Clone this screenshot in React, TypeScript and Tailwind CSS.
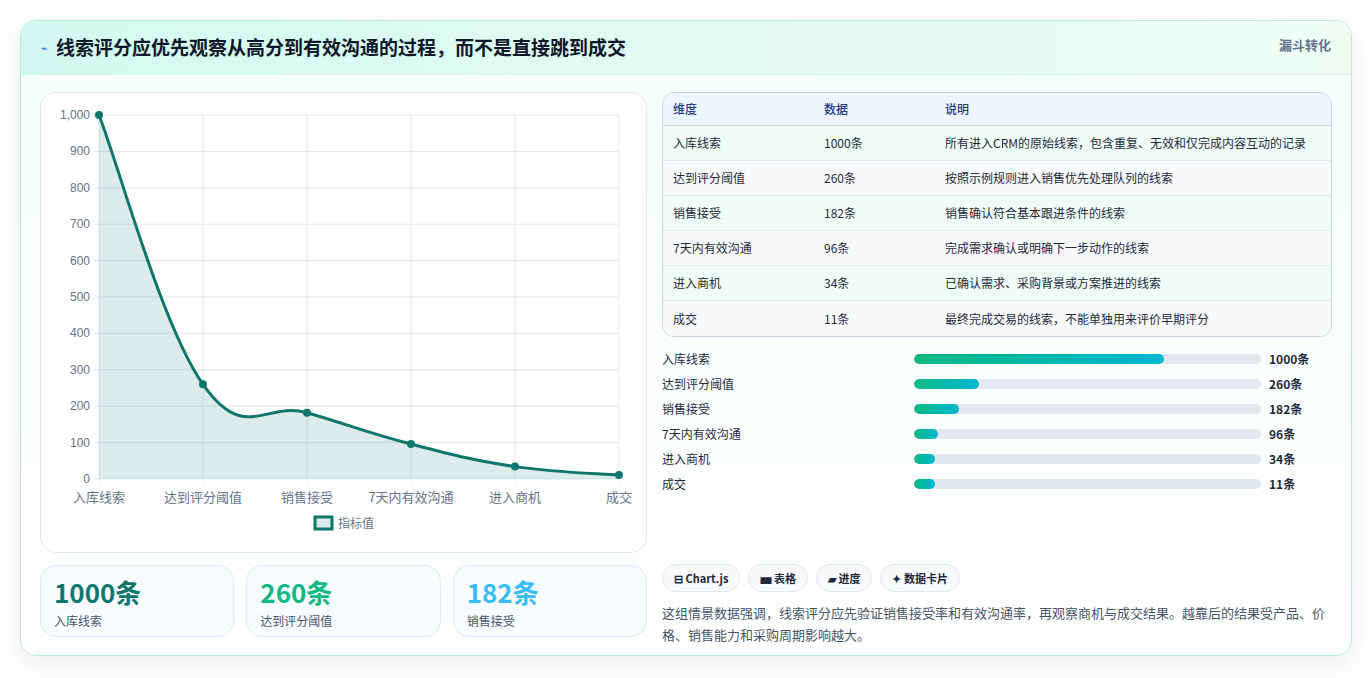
import React from 'react';

const rows = [
  { name: '入库线索', v: 1000, desc: '所有进入CRM的原始线索，包含重复、无效和仅完成内容互动的记录' },
  { name: '达到评分阈值', v: 260, desc: '按照示例规则进入销售优先处理队列的线索' },
  { name: '销售接受', v: 182, desc: '销售确认符合基本跟进条件的线索' },
  { name: '7天内有效沟通', v: 96, desc: '完成需求确认或明确下一步动作的线索' },
  { name: '进入商机', v: 34, desc: '已确认需求、采购背景或方案推进的线索' },
  { name: '成交', v: 11, desc: '最终完成交易的线索，不能单独用来评价早期评分' },
];

const X0 = 58, X1 = 578, Y0 = 22, Y1 = 386;
const pts = rows.map((r, i) => [X0 + (i * (X1 - X0)) / 5, Y1 - (r.v / 1000) * (Y1 - Y0)]);

function curve() {
  let d = `M${pts[0][0]},${pts[0][1]}`;
  const t = 0.4;
  for (let i = 0; i < pts.length - 1; i++) {
    const p0 = pts[i - 1] || pts[i];
    const p1 = pts[i];
    const p2 = pts[i + 1];
    const p3 = pts[i + 2] || p2;
    const c1 = [p1[0] + ((p2[0] - p0[0]) * t) / 2, p1[1] + ((p2[1] - p0[1]) * t) / 2];
    const c2 = [p2[0] - ((p3[0] - p1[0]) * t) / 2, p2[1] - ((p3[1] - p1[1]) * t) / 2];
    d += ` C${c1[0]},${c1[1]} ${c2[0]},${c2[1]} ${p2[0]},${p2[1]}`;
  }
  return d;
}

const Chart: React.FC = () => {
  const line = curve();
  return (
    <svg width="606" height="458" className="block" style={{ fontFamily: '"Noto Sans CJK SC", sans-serif' }}>
      {[0, 100, 200, 300, 400, 500, 600, 700, 800, 900, 1000].map(v => {
        const y = Y1 - (v / 1000) * (Y1 - Y0);
        return (
          <g key={v}>
            <line x1={X0} x2={X1} y1={y} y2={y} stroke="#e2e8f0" />
            <line x1={X0 - 5} x2={X0} y1={y} y2={y} stroke="#e2e8f0" />
            <text x={X0 - 9} y={y + 4} fontSize="12" fill="#64748b" textAnchor="end" fontFamily="Liberation Sans, sans-serif">
              {v === 1000 ? '1,000' : v}
            </text>
          </g>
        );
      })}
      {pts.map((p, i) => (
        <g key={i}>
          <line x1={p[0]} x2={p[0]} y1={Y0} y2={Y1 + 5} stroke="#e2e8f0" />
          <text x={p[0]} y={Y1 + 23} fontSize="13" fill="#64748b" textAnchor="middle">
            {rows[i].name}
          </text>
        </g>
      ))}
      <path d={`${line} L${X1},${Y1} L${X0},${Y1} Z`} fill="#0f766e" fillOpacity="0.14" />
      <path d={line} fill="none" stroke="#0f766e" strokeWidth="3" />
      {pts.map((p, i) => (
        <circle key={i} cx={p[0]} cy={p[1]} r="4" fill="#0f766e" />
      ))}
      <rect x="274" y="424" width="17" height="12" fill="#d8ebe8" stroke="#0f766e" strokeWidth="3" />
      <text x="297" y="435" fontSize="12" fill="#64748b">指标值</text>
    </svg>
  );
};

export default function App() {
  return (
    <div className="min-h-screen bg-white p-[20px] pb-0" style={{ fontFamily: '"Noto Sans CJK SC", sans-serif' }}>
      <div className="h-[636px] rounded-2xl border border-[#b6ece0] bg-gradient-to-b from-[#f4fffb] to-white shadow-[0_8px_24px_rgba(15,23,42,0.08)] overflow-hidden">
        <div className="h-[54px] flex items-center justify-between px-[20px] bg-gradient-to-r from-[#d3faf0] to-[#effdf5] border-b border-[#d8efe9]">
          <div className="flex items-center gap-[8px]">
            <span className="text-[#2563eb] text-[11px]">⌁</span>
            <span className="text-[19px] font-bold text-[#0f172a]">线索评分应优先观察从高分到有效沟通的过程，而不是直接跳到成交</span>
          </div>
          <span className="self-start mt-[14px] text-[13px] font-bold text-[#64748b]">漏斗转化</span>
        </div>
        <div className="flex gap-[15px] px-[19px] pt-[17px]">
          <div className="w-[607px] flex flex-col gap-[12px]">
            <div className="h-[461px] rounded-2xl border border-[#e2e8f0] bg-white overflow-hidden">
              <Chart />
            </div>
            <div className="grid grid-cols-3 gap-[12px]">
              {[
                ['1000条', '入库线索', 'text-[#0f766e]'],
                ['260条', '达到评分阈值', 'text-[#10b981]'],
                ['182条', '销售接受', 'text-[#38bdf8]'],
              ].map(([v, l, c]) => (
                <div key={l} className="h-[72px] rounded-2xl border border-[#dbeafe] bg-[#f8fbff] px-[13px] pt-[8px]">
                  <div className={`text-[26px] font-bold leading-[36px] ${c}`}>{v}</div>
                  <div className="text-[12px] text-[#475569] mt-[2px]">{l}</div>
                </div>
              ))}
            </div>
          </div>
          <div className="flex-1 flex flex-col">
            <div className="rounded-xl border border-[#cbd5e1] overflow-hidden text-[12px] text-[#1e293b]">
              <div className="flex h-[33px] items-center bg-[#eef5ff] border-b border-[#cbd5e1] text-[#1e3a8a] font-medium">
                <div className="w-[161px] pl-[10px]">维度</div>
                <div className="w-[121px]">数据</div>
                <div>说明</div>
              </div>
              {rows.map((r, i) => (
                <div key={r.name} className={`flex h-[35px] items-center ${i % 2 === 0 ? 'bg-[#f0fdf7]' : 'bg-[#f8fafc]'} ${i < 5 ? 'border-b border-[#e2e8f0]' : ''}`}>
                  <div className="w-[161px] pl-[10px]">{r.name}</div>
                  <div className="w-[121px]">{r.v}条</div>
                  <div>{r.desc}</div>
                </div>
              ))}
            </div>
            <div className="mt-[9px] flex flex-col">
              {rows.map(r => (
                <div key={r.name} className="flex h-[25px] items-center text-[12px] text-[#1e293b]">
                  <div className="w-[252px]">{r.name}</div>
                  <div className="w-[347px] h-[10px] rounded-full bg-[#e2e8f0] overflow-hidden">
                    <div className="h-full rounded-full bg-gradient-to-r from-[#10b981] to-[#06b6d4]" style={{ width: `${Math.max(6, (r.v / 1000) * 72)}%` }} />
                  </div>
                  <div className="pl-[8px] font-bold">{r.v}条</div>
                </div>
              ))}
            </div>
            <div className="mt-[68px] flex gap-[8px] text-[11px] font-bold text-[#1e293b]">
              {['⊟ Chart.js', '▅ 表格', '▰ 进度', '✦ 数据卡片'].map(t => (
                <span key={t} className="h-[28px] flex items-center px-[11px] rounded-full border border-[#e2e8f0] bg-[#f8fafc]">{t}</span>
              ))}
            </div>
            <p className="mt-[10px] text-[13px] leading-[22px] text-[#475569] pr-[6px]">
              这组情景数据强调，线索评分应先验证销售接受率和有效沟通率，再观察商机与成交结果。越靠后的结果受产品、价格、销售能力和采购周期影响越大。
            </p>
          </div>
        </div>
      </div>
    </div>
  );
}
